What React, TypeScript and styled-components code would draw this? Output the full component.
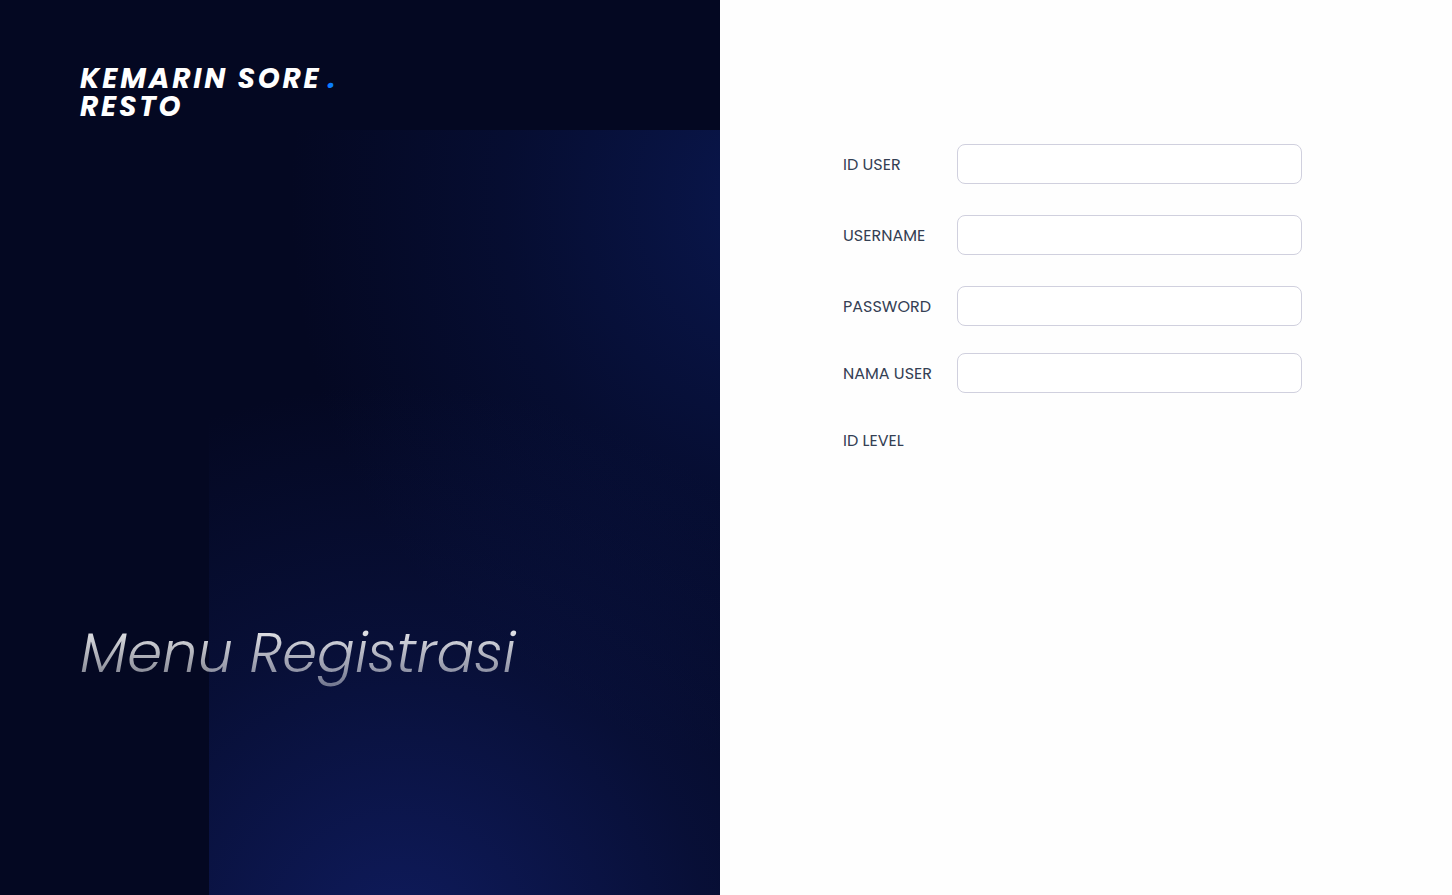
import React from "react";
import styled, { createGlobalStyle } from "styled-components";

const GlobalStyle = createGlobalStyle`
  *, *::before, *::after { box-sizing: border-box; }
  body {
    margin: 0;
    background: #fefefe;
    font-family: Poppins, Inter, "Open Sans", sans-serif;
  }
`;

const Page = styled.div`
  display: grid;
  grid-template-columns: minmax(360px, 720px) minmax(0, 1fr);
  min-height: 100vh;
`;

const BrandPanel = styled.aside`
  display: flex;
  flex-direction: column;
  justify-content: space-between;
  padding: 65px 80px 200px;
  background-color: #040822;
  background-image:
    radial-gradient(circle 560px at 190px 560px, rgba(20, 36, 120, 0.68), rgba(18, 34, 110, 0.27) 55%, rgba(18, 34, 110, 0)),
    radial-gradient(ellipse 480px 560px at 100% 70px, rgba(14, 34, 110, 0.56), rgba(14, 34, 110, 0.2) 55%, rgba(14, 34, 110, 0));
  background-repeat: no-repeat;
  background-size: calc(100% - 209px) 511px, calc(100% + 50px) calc(100% - 130px);
  background-position: left 209px bottom 0, left 0 top 130px;
`;

const Logo = styled.div`
  display: flex;
  align-items: flex-start;
  gap: 6px;
  color: #ffffff;
  font-size: 28px;
  font-style: italic;
  font-weight: 700;
  line-height: 28px;
  letter-spacing: 0.1em;
`;

const LogoDot = styled.span`
  color: #0a7cff;
`;

const Headline = styled.h1`
  align-self: flex-start;
  margin: 0;
  padding-right: 8px;
  font-size: 56px;
  font-style: italic;
  font-weight: 300;
  line-height: 84px;
  white-space: nowrap;
  color: transparent;
  background: linear-gradient(180deg, #ffffff 6%, rgba(255, 255, 255, 0.36) 100%);
  background-clip: text;
  -webkit-background-clip: text;
`;

const FormPanel = styled.main`
  padding: 144px 150px 64px 123px;
`;

const Form = styled.form`
  display: flex;
  flex-direction: column;
  gap: 27px;
`;

const Credentials = styled.div`
  display: flex;
  flex-direction: column;
  gap: 31px;
`;

const Field = styled.div`
  display: grid;
  grid-template-columns: 114px minmax(0, 1fr);
  align-items: center;
  min-height: 40px;
`;

const Label = styled.label`
  padding-top: 2px;
  color: #344054;
  font-size: 16px;
  line-height: 24px;
  white-space: nowrap;
`;

const TextInput = styled.input`
  width: 100%;
  height: 40px;
  padding: 0 12px;
  border: 1px solid #d0d0de;
  border-radius: 8px;
  background: #ffffff;
  color: #344054;
  font: inherit;
  font-size: 16px;
`;

type TextFieldProps = { id: string; label: string; type?: string };

function TextField({ id, label, type = "text" }: TextFieldProps) {
  return (
    <Field>
      <Label htmlFor={id}>{label}</Label>
      <TextInput id={id} name={id} type={type} />
    </Field>
  );
}

export default function App() {
  return (
    <>
      <GlobalStyle />
      <Page>
        <BrandPanel>
          <Logo>
            <span>
              KEMARIN SORE
              <br />
              RESTO
            </span>
            <LogoDot>.</LogoDot>
          </Logo>
          <Headline>Menu Registrasi</Headline>
        </BrandPanel>
        <FormPanel>
          <Form>
            <Credentials>
              <TextField id="id-user" label="ID USER" />
              <TextField id="username" label="USERNAME" />
              <TextField id="password" label="PASSWORD" type="password" />
            </Credentials>
            <TextField id="nama-user" label="NAMA USER" />
            <Field>
              <Label as="span">ID LEVEL</Label>
            </Field>
          </Form>
        </FormPanel>
      </Page>
    </>
  );
}
